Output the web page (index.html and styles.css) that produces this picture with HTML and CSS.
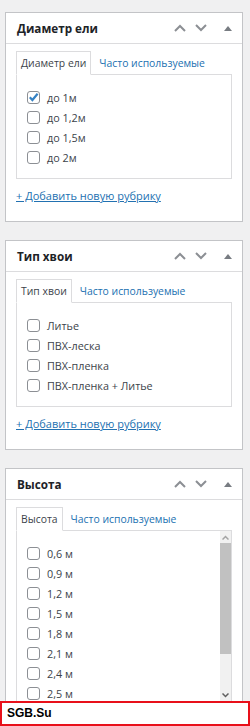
FILE: index.html
```html
<!DOCTYPE html>
<html lang="ru">
<head>
<meta charset="utf-8">
<title>Рубрики</title>
<link rel="stylesheet" href="styles.css">
</head>
<body>
<div class="page">

  <section class="box">
    <header class="box-head">
      <h2 class="box-title">Диаметр ели</h2>
      <div class="controls">
        <span class="ctl"><svg width="12" height="8" viewBox="0 0 12 8"><path d="M1 7 L6 2 L11 7" fill="none" stroke="#8c8f94" stroke-width="2"/></svg></span>
        <span class="ctl"><svg width="12" height="8" viewBox="0 0 12 8"><path d="M1 1 L6 6 L11 1" fill="none" stroke="#8c8f94" stroke-width="2"/></svg></span>
        <span class="ctl ctl-toggle"><svg width="8" height="5" viewBox="0 0 8 5"><path d="M0 5 L4 0 L8 5 Z" fill="#787c82"/></svg></span>
      </div>
    </header>
    <div class="box-body">
      <ul class="tabs">
        <li class="tab tab-active">Диаметр ели</li>
        <li class="tab"><a href="#">Часто используемые</a></li>
      </ul>
      <div class="tab-panel">
        <ul class="checklist">
          <li class="item"><span class="cb cb-checked"><svg width="11" height="11" viewBox="0 0 11 11"><path d="M1.8 5.3 L4.4 8 L9.6 1.8" fill="none" stroke="#3582c4" stroke-width="2.2"/></svg></span>до 1м</li>
          <li class="item"><span class="cb"></span>до 1,2м</li>
          <li class="item"><span class="cb"></span>до 1,5м</li>
          <li class="item"><span class="cb"></span>до 2м</li>
        </ul>
      </div>
      <a class="add-link" href="#">+ Добавить новую рубрику</a>
    </div>
  </section>

  <section class="box">
    <header class="box-head">
      <h2 class="box-title">Тип хвои</h2>
      <div class="controls">
        <span class="ctl"><svg width="12" height="8" viewBox="0 0 12 8"><path d="M1 7 L6 2 L11 7" fill="none" stroke="#8c8f94" stroke-width="2"/></svg></span>
        <span class="ctl"><svg width="12" height="8" viewBox="0 0 12 8"><path d="M1 1 L6 6 L11 1" fill="none" stroke="#8c8f94" stroke-width="2"/></svg></span>
        <span class="ctl ctl-toggle"><svg width="8" height="5" viewBox="0 0 8 5"><path d="M0 5 L4 0 L8 5 Z" fill="#787c82"/></svg></span>
      </div>
    </header>
    <div class="box-body">
      <ul class="tabs">
        <li class="tab tab-active">Тип хвои</li>
        <li class="tab"><a href="#">Часто используемые</a></li>
      </ul>
      <div class="tab-panel">
        <ul class="checklist">
          <li class="item"><span class="cb"></span>Литье</li>
          <li class="item"><span class="cb"></span>ПВХ-леска</li>
          <li class="item"><span class="cb"></span>ПВХ-пленка</li>
          <li class="item"><span class="cb"></span>ПВХ-пленка + Литье</li>
        </ul>
      </div>
      <a class="add-link" href="#">+ Добавить новую рубрику</a>
    </div>
  </section>

  <section class="box">
    <header class="box-head">
      <h2 class="box-title">Высота</h2>
      <div class="controls">
        <span class="ctl"><svg width="12" height="8" viewBox="0 0 12 8"><path d="M1 7 L6 2 L11 7" fill="none" stroke="#8c8f94" stroke-width="2"/></svg></span>
        <span class="ctl"><svg width="12" height="8" viewBox="0 0 12 8"><path d="M1 1 L6 6 L11 1" fill="none" stroke="#8c8f94" stroke-width="2"/></svg></span>
        <span class="ctl ctl-toggle"><svg width="8" height="5" viewBox="0 0 8 5"><path d="M0 5 L4 0 L8 5 Z" fill="#787c82"/></svg></span>
      </div>
    </header>
    <div class="box-body">
      <ul class="tabs">
        <li class="tab tab-active">Высота</li>
        <li class="tab"><a href="#">Часто используемые</a></li>
      </ul>
      <div class="tab-panel tab-panel-scroll">
        <ul class="checklist checklist-scroll">
          <li class="item"><span class="cb"></span>0,6 м</li>
          <li class="item"><span class="cb"></span>0,9 м</li>
          <li class="item"><span class="cb"></span>1,2 м</li>
          <li class="item"><span class="cb"></span>1,5 м</li>
          <li class="item"><span class="cb"></span>1,8 м</li>
          <li class="item"><span class="cb"></span>2,1 м</li>
          <li class="item"><span class="cb"></span>2,4 м</li>
          <li class="item"><span class="cb"></span>2,5 м</li>
          <li class="item"><span class="cb"></span>3 м</li>
          <li class="item"><span class="cb"></span>3,5 м</li>
        </ul>
        <div class="scrollbar">
          <span class="sb-btn"><svg width="7" height="5" viewBox="0 0 7 5"><path d="M0.5 4.5 L3.5 1.5 L6.5 4.5" fill="none" stroke="#a3a3a3" stroke-width="1.5"/></svg></span>
          <span class="sb-thumb"></span>
          <span class="sb-track"></span>
          <span class="sb-btn"><svg width="7" height="5" viewBox="0 0 7 5"><path d="M0.5 0.5 L3.5 3.5 L6.5 0.5" fill="none" stroke="#606060" stroke-width="1.5"/></svg></span>
        </div>
      </div>
      <a class="add-link" href="#">+ Добавить новую рубрику</a>
    </div>
  </section>

</div>
<div class="watermark">SGB.Su</div>
</body>
</html>
```

FILE: styles.css
```css
html, body {
  margin: 0;
  padding: 0;
}
body {
  background: #f0f0f1;
  font-family: "Open Sans", "Noto Sans", sans-serif;
  font-size: 10.4px;
  color: #3c434a;
}
.page {
  padding: 12px 7px 0 5px;
}
.box {
  background: #fff;
  border: 1px solid #c3c4c7;
  margin-bottom: 18px;
}
.box-head {
  display: flex;
  align-items: center;
  height: 30px;
  border-bottom: 1px solid #dcdcde;
}
.box-title {
  flex: 1;
  margin: 0;
  padding-left: 11px;
  font-size: 11.7px;
  font-weight: 700;
  color: #1d2327;
}
.controls {
  display: flex;
  align-items: center;
  height: 30px;
}
.ctl {
  display: flex;
  align-items: center;
  justify-content: center;
  width: 21px;
  height: 30px;
}
.ctl-toggle {
  width: 28px;
  margin-left: 3px;
}
.box-body {
  padding: 7px 10px 17px;
}
.tabs {
  display: flex;
  list-style: none;
  margin: 0 0 -1px;
  padding: 0;
}
.tab {
  line-height: 22px;
  padding: 0 4px;
  border: 1px solid transparent;
}
.tab a {
  color: #2271b1;
  text-decoration: none;
  padding-left: 3px;
}
.tab-active {
  position: relative;
  background: #fff;
  border-color: #dcdcde;
  border-bottom-color: #fff;
}
.tab-panel {
  border: 1px solid #dcdcde;
  padding: 12px 10px 11px;
}
.checklist {
  list-style: none;
  margin: 0;
  padding: 0;
  font-size: 10.8px;
}
.item {
  display: flex;
  align-items: center;
  height: 20px;
  white-space: nowrap;
}
.cb {
  box-sizing: border-box;
  width: 13px;
  height: 13px;
  border: 1px solid #8c8f94;
  border-radius: 3px;
  margin-right: 7px;
  display: flex;
  align-items: center;
  justify-content: center;
  flex: none;
}
.add-link {
  display: block;
  margin-top: 9px;
  line-height: 16px;
  font-size: 11px;
  color: #2271b1;
  text-decoration: underline;
}
.tab-panel-scroll {
  display: flex;
  height: 170px;
  padding: 0;
}
.checklist-scroll {
  flex: 1;
  overflow: hidden;
  padding: 12px 10px 0;
}
.scrollbar {
  width: 11px;
  display: flex;
  flex-direction: column;
  background: #f1f1f1;
}
.sb-btn {
  height: 12px;
  display: flex;
  align-items: center;
  justify-content: center;
  flex: none;
}
.sb-thumb {
  height: 111px;
  background: #c1c1c1;
  flex: none;
}
.sb-track {
  flex: 1;
}
.watermark {
  position: fixed;
  left: 0;
  bottom: 0;
  width: 250px;
  height: 25px;
  box-sizing: border-box;
  border: 2px solid #e8101a;
  background: #fff;
  padding-left: 5px;
  font-family: "Liberation Sans", Arial, sans-serif;
  font-weight: 700;
  font-size: 12px;
  line-height: 21px;
  color: #000;
}
```
